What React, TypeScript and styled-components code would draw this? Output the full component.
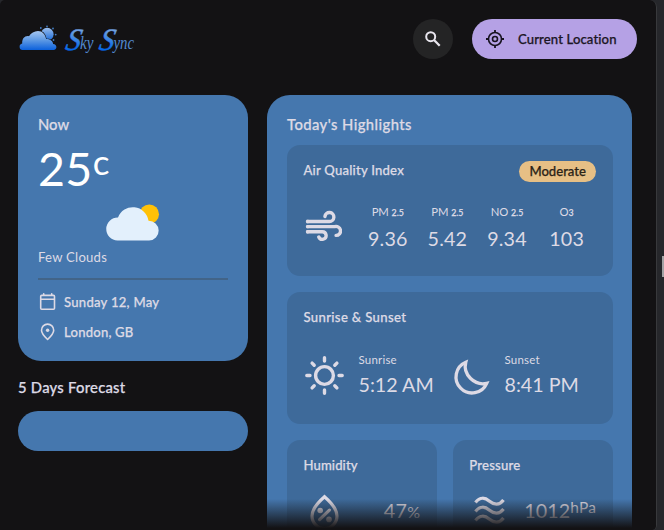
import React from 'react';
import styled, { createGlobalStyle } from 'styled-components';

const ink = '#dddae5';

const GlobalStyle = createGlobalStyle`
  * { box-sizing: border-box; }
  body { margin: 0; background: #26272b; overflow: hidden; }
  h1, h2, h3, p { margin: 0; font-weight: inherit; }
`;

const Window = styled.div`
  display: flex;
  width: 664px;
  height: 530px;
  overflow: hidden;
  background: #26272b;
  color: ${ink};
  font-family: Lato, 'Open Sans', sans-serif;
  font-variant-ligatures: none;
  white-space: nowrap;
`;

const Page = styled.main`
  position: relative;
  width: 657px;
  height: 530px;
  overflow: hidden;
  border-right: 1px solid #38393c;
  border-radius: 5px 7px 5px 0;
  background: #131214;
`;

const ScrollRail = styled.div`
  flex: 1;
  padding: 256px 0 0 5px;
`;

const ScrollThumb = styled.div`
  height: 21px;
  background: #a3a3a5;
`;

const Label = styled.span<{ $size?: number; $weight?: number; $track?: number; $line?: number }>`
  display: block;
  font-size: ${(p) => p.$size ?? 13.1}px;
  font-weight: ${(p) => p.$weight ?? 500};
  letter-spacing: ${(p) => p.$track ?? 0}px;
  line-height: ${(p) => p.$line ?? 18}px;
  -webkit-text-stroke: ${(p) => (p.$weight === 400 ? 0 : 0.25)}px currentColor;
`;

const Header = styled.header`
  display: flex;
  align-items: center;
  height: 78px;
  padding: 0 19px 0 18px;
`;

const HeaderActions = styled.div`
  display: flex;
  gap: 19px;
  margin-left: auto;
`;

const SearchButton = styled.button`
  display: grid;
  place-items: center;
  width: 40px;
  height: 40px;
  padding: 0;
  border: 0;
  border-radius: 50%;
  background: #242425;
`;

const LocationButton = styled.button`
  display: flex;
  align-items: center;
  gap: 13px;
  width: 165px;
  height: 40px;
  padding: 0 0 0 13px;
  border: 0;
  border-radius: 20px;
  background: #b5a1e5;
  color: #1b1624;
  font-family: inherit;
`;

const Columns = styled.div`
  display: grid;
  grid-template-columns: 230px 365px;
  column-gap: 19px;
  align-items: start;
  padding: 17px 0 0 18px;
`;

const NowCard = styled.section`
  height: 266px;
  padding: 20px 20px 0;
  border-radius: 23px;
  background: #4577ae;
`;

const Temperature = styled.div`
  display: flex;
  height: 70px;
  padding-top: 6.5px;
  color: #fff;
`;

const WeatherArt = styled.div`
  display: flex;
  justify-content: center;
  height: 45px;
  padding-top: 0.5px;
`;

const Details = styled.ul`
  display: grid;
  grid-auto-rows: 29.5px;
  align-items: center;
  margin: 12px 0 0;
  padding: 7.5px 0 0;
  border-top: 2px solid #426488;
  list-style: none;
`;

const Detail = styled.li`
  display: flex;
  align-items: center;
  gap: 6px;
`;

const ForecastTitle = styled.h2`
  padding: 17px 0 15px;
`;

const ForecastCard = styled.section`
  height: 39.5px;
  border-radius: 20px;
  background: #4577ae;
`;

const Highlights = styled.section`
  height: 470px;
  padding: 20px 19.5px 0 20px;
  border-radius: 23px;
  background: #4577ae;
`;

const HighlightGrid = styled.div`
  display: grid;
  grid-template-columns: 149.5px 160px;
  grid-auto-rows: 131.5px;
  gap: 16.2px;
  margin-top: 11.5px;
`;

const Tile = styled.article<{ $wide?: boolean }>`
  grid-column: ${(p) => (p.$wide ? '1 / -1' : 'auto')};
  padding: 16px 16.5px;
  border-radius: 13px;
  background: #3e6a9a;
`;

const TileHead = styled.div`
  display: flex;
  justify-content: space-between;
  height: 21px;
`;

const Badge = styled.div`
  width: 77px;
  height: 21px;
  border-radius: 11px;
  background: #e6bf85;
  color: #2c2418;
  text-align: center;
`;

const AirRow = styled.div`
  display: grid;
  grid-template-columns: 54.5px repeat(4, 59.6px);
  padding-top: 21px;
`;

const AirIcon = styled.div`
  padding: 7.5px 0 0 1.5px;
`;

const Reading = styled.div`
  display: flex;
  flex-direction: column;
  align-items: center;
`;

const Pollutant = styled.div<{ $tight: boolean }>`
  display: flex;
  align-items: baseline;
  gap: ${(p) => (p.$tight ? 0 : 3)}px;
  height: 19px;
`;

const SunRow = styled.div`
  display: grid;
  grid-template-columns: 55px 91.5px 54.5px auto;
  padding-top: 22px;
`;

const SunIcon = styled.div`
  padding-top: 3.5px;
`;

const MoonIcon = styled.div`
  padding: 6.5px 0 0 1px;
`;

const MetricRow = styled.div`
  display: flex;
  justify-content: space-between;
  padding-top: 15px;
`;

const WavesSlot = styled.div`
  padding: 2.5px 0 0 4px;
`;

const Metric = styled.div`
  display: flex;
  align-items: baseline;
  padding-top: 6.5px;
`;

const Raised = styled.sup`
  font-size: 15.5px;
  line-height: 0;
  letter-spacing: 0.2px;
  vertical-align: 5px;
`;

const BottomFade = styled.div`
  position: absolute;
  right: 0;
  bottom: 0;
  left: 0;
  height: 31px;
  background: linear-gradient(to bottom, rgba(19, 18, 20, 0), #131214 94%);
`;

const LogoArt = () => (
  <svg width="120" height="40" viewBox="18 20 120 40" role="img" aria-label="Sky Sync">
    <defs>
      <linearGradient id="cloud" x1="0" y1="31" x2="0" y2="51" gradientUnits="userSpaceOnUse">
        <stop offset="0" stopColor="#aecbf1" />
        <stop offset="0.5" stopColor="#5f9ae4" />
        <stop offset="1" stopColor="#0b60dc" />
      </linearGradient>
      <linearGradient id="sun" x1="0" y1="28" x2="0" y2="41" gradientUnits="userSpaceOnUse">
        <stop offset="0" stopColor="#a3c3ed" />
        <stop offset="1" stopColor="#1f6edb" />
      </linearGradient>
      <linearGradient id="letters" x1="0" y1="-21" x2="0" y2="0" gradientUnits="userSpaceOnUse">
        <stop offset="0" stopColor="#78a5df" />
        <stop offset="1" stopColor="#0568e8" />
      </linearGradient>
    </defs>
    <circle cx="47.2" cy="35.2" r="6.4" fill="url(#sun)" />
    <g fill="#427cc4">
      <circle cx="40.8" cy="29" r="0.9" /><circle cx="47" cy="27.3" r="0.9" /><circle cx="53" cy="29.5" r="0.9" />
      <circle cx="55.7" cy="35.6" r="0.9" /><circle cx="53.5" cy="41" r="0.9" />
    </g>
    <path d="M22.5 51a3.3 3.3 0 0 1-.3-6.5C21.8 39.5 25 36.4 29 37.2c2-3 5.2-5.1 9-5.1 4.2 0 7.2 3.2 8.1 8 4 0 6.9 2 7 5 4.2.3 4.6 5.9.3 5.9Z" fill="url(#cloud)" stroke="#131214" strokeWidth="1.2" paintOrder="stroke" />
    <g fontFamily="'Liberation Serif', serif" fontStyle="italic" fill="url(#letters)">
      <text transform="translate(64.5 50.5) skewX(-12)" fontSize="31" stroke="url(#letters)" strokeWidth="0.5" textLength="15" lengthAdjust="spacingAndGlyphs">S</text>
      <text x="80" y="49.8" fontSize="18" textLength="13.5" lengthAdjust="spacingAndGlyphs" fill="#5288cf">ky</text>
      <text transform="translate(98 50.5) skewX(-12)" fontSize="31" stroke="url(#letters)" strokeWidth="0.5" textLength="15" lengthAdjust="spacingAndGlyphs">S</text>
      <text x="113.5" y="49.8" fontSize="18" textLength="20.5" lengthAdjust="spacingAndGlyphs" fill="#5288cf">ync</text>
    </g>
  </svg>
);

const SearchIcon = () => (
  <svg width="20" height="20" viewBox="0 0 20 20" fill="none" stroke="#e9e6ee" strokeWidth="2">
    <circle cx="7.7" cy="7.7" r="4.5" />
    <path d="m11 11 5.7 5.7" strokeWidth="2.3" />
  </svg>
);

const LocateIcon = () => (
  <svg width="20" height="20" viewBox="0 0 20 20" fill="none" stroke="#17131f" strokeWidth="1.6">
    <circle cx="10" cy="10" r="6.5" />
    <circle cx="10" cy="10" r="2.5" />
    <path d="M10 1v2.5M10 16.5v2.5M1 10h2.5M16.5 10h2.5" strokeWidth="1.8" />
  </svg>
);

const CloudSun = () => (
  <svg width="54" height="38" viewBox="0 0 54 38">
    <circle cx="43.3" cy="10.2" r="9.7" fill="#ffc107" />
    <path d="M11.5 36.6A11.5 11.5 0 0 1 12 13.6 15.8 15.8 0 0 1 42.5 16.8 9.9 9.9 0 1 1 43 36.6Z" fill="#e3f0fc" />
  </svg>
);

const CalendarIcon = () => (
  <svg width="20" height="20" viewBox="0 0 20 20" fill="none" stroke={ink} strokeWidth="1.6" strokeLinecap="round">
    <rect x="2.7" y="3.4" width="13.8" height="13.8" rx="1" />
    <path d="M3 7.2h13.2M5.7 1.7v1.6M13.7 1.7v1.6" />
  </svg>
);

const PinIcon = () => (
  <svg width="20" height="20" viewBox="0 0 20 20">
    <path d="M9.6 17.5C5.9 14 3.5 11.2 3.5 8.2a6.1 6.1 0 0 1 12.2 0c0 3-2.4 5.8-6.1 9.3Z" fill="none" stroke={ink} strokeWidth="1.6" strokeLinejoin="round" />
    <circle cx="9.6" cy="8.2" r="1.7" fill={ink} />
  </svg>
);

const WindIcon = () => (
  <svg width="37" height="32" viewBox="0 0 37 32" fill="none" stroke={ink} strokeWidth="3.4" strokeLinecap="round">
    <path d="M2.5 11.5h21.8a4.5 4.5 0 1 0-4.4-5" />
    <path d="M2.5 16.6h27.2a4.5 4.5 0 1 1 1.4 8.8" />
    <path d="M2.5 21.7h14.8a3.8 3.8 0 1 1-3.5 5.3" />
    <path d="M1.5 11.5h2M1.5 16.6h2M1.5 21.7h2" strokeLinecap="butt" />
  </svg>
);

const SunGlyph = () => (
  <svg width="41" height="41" viewBox="-20.5 -20.5 41 41" fill="none" stroke={ink} strokeWidth="3.4" strokeLinecap="round">
    <circle r="8.9" />
    <path d="M0-17.7v3.2M0 17.7v-3.2M-17.7 0h3.2M17.7 0h-3.2M-12.4-12.4l2.1 2.1M12.4-12.4l-2.1 2.1M-12.4 12.4l2.1-2.1M12.4 12.4l-2.1-2.1" />
  </svg>
);

const MoonGlyph = () => (
  <svg width="40" height="40" viewBox="0 0 40 40" fill="none" stroke={ink} strokeWidth="3.3">
    <path d="M14.8 4.2A16 16 0 1 0 35.7 25.3C24 28 11.5 17 14.8 4.2Z" />
  </svg>
);

const DropIcon = () => (
  <svg width="40" height="40" viewBox="0 0 40 40" fill="none" stroke={ink} strokeWidth="3.2" strokeLinecap="round">
    <path d="M20.5 4.7C12.7 11.5 8 17 8 24a12.5 12.5 0 0 0 25 0c0-7-4.7-12.5-12.500-19.300Z" />
    <path d="m15.6 27.6 9.8-9.5" />
    <g fill={ink} stroke="none"><circle cx="16.2" cy="18.5" r="2.8" /><circle cx="25" cy="27.4" r="2.8" /></g>
  </svg>
);

const WavesIcon = () => (
  <svg width="34" height="36" viewBox="0 0 34 36" fill="none" stroke={ink} strokeWidth="3.2" strokeLinecap="butt">
    {[0, 9, 18].map((y) => (
      <path key={y} transform={`translate(0 ${y})`} d="M2.5 8.5C7 2.5 12 3.5 16.5 7.3S26.5 11.5 30.5 6" />
    ))}
  </svg>
);

const readings = [
  { name: 'PM', sub: '2.5', value: '9.36' },
  { name: 'PM', sub: '2.5', value: '5.42' },
  { name: 'NO', sub: '2.5', value: '9.34' },
  { name: 'O', sub: '3', value: '103' },
];

export default function App() {
  return (
    <Window>
      <GlobalStyle />
      <Page>
        <Header>
          <LogoArt />
          <HeaderActions>
            <SearchButton aria-label="Search"><SearchIcon /></SearchButton>
            <LocationButton>
              <LocateIcon />
              <Label $track={0.12}>Current Location</Label>
            </LocationButton>
          </HeaderActions>
        </Header>
        <Columns>
          <div>
            <NowCard>
              <Label as="h2" $size={14.8}>Now</Label>
              <Temperature>
                <Label $size={46.5} $weight={400} $track={0.4} $line={56}>25</Label>
                <Label $size={35} $weight={400} $line={43}>c</Label>
              </Temperature>
              <WeatherArt><CloudSun /></WeatherArt>
              <Label $weight={400} $track={0.25}>Few Clouds</Label>
              <Details>
                <Detail><CalendarIcon /><Label $track={0.25}>Sunday 12, May</Label></Detail>
                <Detail><PinIcon /><Label $track={0.2}>London, GB</Label></Detail>
              </Details>
            </NowCard>
            <ForecastTitle><Label $size={14.8} $track={0.25}>5 Days Forecast</Label></ForecastTitle>
            <ForecastCard />
          </div>
          <Highlights>
            <Label as="h2" $size={14.8} $track={0.42}>Today's Highlights</Label>
            <HighlightGrid>
              <Tile $wide>
                <TileHead>
                  <Label as="h3" $track={0.22}>Air Quality Index</Label>
                  <Badge><Label $line={21.5}>Moderate</Label></Badge>
                </TileHead>
                <AirRow>
                  <AirIcon><WindIcon /></AirIcon>
                  {readings.map((r, i) => (
                    <Reading key={i}>
                      <Pollutant $tight={r.sub === '3'}>
                        <Label $size={11.3} $weight={400} $track={-0.2}>{r.name}</Label>
                        <Label $size={8.8}>{r.sub}</Label>
                      </Pollutant>
                      <Label $size={19.7} $weight={400} $track={0.2} $line={34}>{r.value}</Label>
                    </Reading>
                  ))}
                </AirRow>
              </Tile>
              <Tile $wide>
                <TileHead><Label as="h3" $track={0.35}>Sunrise &amp; Sunset</Label></TileHead>
                <SunRow>
                  <SunIcon><SunGlyph /></SunIcon>
                  <div>
                    <Label $size={11.5} $weight={400} $track={0.2}>Sunrise</Label>
                    <Label $size={19.7} $weight={400} $line={31}>5:12 AM</Label>
                  </div>
                  <MoonIcon><MoonGlyph /></MoonIcon>
                  <div>
                    <Label $size={11.5} $weight={400} $track={0.2}>Sunset</Label>
                    <Label $size={19.7} $weight={400} $line={31}>8:41 PM</Label>
                  </div>
                </SunRow>
              </Tile>
              <Tile>
                <TileHead><Label as="h3" $track={0.1}>Humidity</Label></TileHead>
                <MetricRow>
                  <DropIcon />
                  <Metric>
                    <Label $size={19.7} $weight={400} $track={0.3} $line={26}>47</Label>
                    <Label $size={16} $weight={400}>%</Label>
                  </Metric>
                </MetricRow>
              </Tile>
              <Tile>
                <TileHead><Label as="h3" $track={0.22}>Pressure</Label></TileHead>
                <MetricRow>
                  <WavesSlot><WavesIcon /></WavesSlot>
                  <Metric>
                    <Label $size={19.7} $weight={400} $track={0.1} $line={26}>1012<Raised>hPa</Raised></Label>
                  </Metric>
                </MetricRow>
              </Tile>
            </HighlightGrid>
          </Highlights>
        </Columns>
        <BottomFade />
      </Page>
      <ScrollRail><ScrollThumb /></ScrollRail>
    </Window>
  );
}
